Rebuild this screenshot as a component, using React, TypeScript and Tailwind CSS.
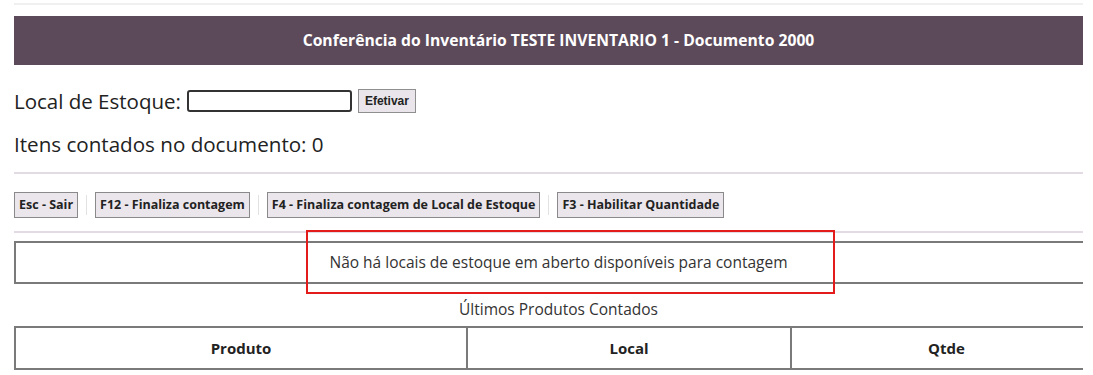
import React from 'react';

const FONT = { fontFamily: '"Open Sans", "Noto Sans", Arial, sans-serif' };

const SHORTCUTS = [
  'Esc - Sair',
  'F12 - Finaliza contagem',
  'F4 - Finaliza contagem de Local de Estoque',
  'F3 - Habilitar Quantidade',
];

export default function App() {
  return (
    <div className="relative w-[1093px] h-[375px] overflow-hidden bg-white text-[#222]" style={FONT}>
      <div className="w-[1083px] overflow-hidden">
        <div className="w-[1103px] pl-[14px] pt-[3px]">
          <div className="h-[2px] bg-[#f0f0f0]" />

          {/* Title bar */}
          <div className="mt-[11px] h-[49px] bg-[#5c4a5a] flex items-center justify-center">
            <h1 className="text-white font-bold text-[15.7px]">
              Conferência do Inventário TESTE INVENTARIO 1 - Documento 2000
            </h1>
          </div>

          {/* Local */}
          <div className="mt-[24px] flex items-center h-[24px]">
            <span className="text-[20.5px] leading-none">Local de Estoque:</span>
            <input
              type="text"
              className="ml-[6px] w-[165px] h-[22px] border-2 border-[#333] rounded-[3px] outline-none px-1"
            />
            <button
              className="ml-[6px] h-[24px] w-[58px] bg-[#e9e5ea] border border-[#8f8f8f] text-[12px] font-bold"
              style={{ fontFamily: '"Liberation Sans", Arial, sans-serif' }}
            >
              Efetivar
            </button>
          </div>

          <p className="mt-[19px] text-[20.6px] leading-[24px]">Itens contados no documento: 0</p>

          <div className="mt-[16px] h-[2px] bg-[#e3dbe3]" />

          {/* Shortcuts */}
          <div className="mt-[18px] flex items-center">
            {SHORTCUTS.map((s, i) => (
              <React.Fragment key={s}>
                {i > 0 && <div className="mx-[8px] w-[1px] h-[20px] bg-[#e2e2e2]" />}
                <button className="h-[26px] px-[4px] bg-[#ebe6eb] border border-[#8a8a8a] text-[12.5px] font-bold whitespace-nowrap">
                  {s}
                </button>
              </React.Fragment>
            ))}
          </div>

          <div className="mt-[13px] h-[2px] bg-[#e3dbe3]" />

          {/* Message */}
          <div className="mt-[8px] h-[43px] border-2 border-[#7a7a7a] flex items-center justify-center">
            <span className="text-[15.5px] text-[#333]">Não há locais de estoque em aberto disponíveis para contagem</span>
          </div>

          <p className="mt-[14px] text-center text-[15.5px] text-[#333] leading-[22px]">Últimos Produtos Contados</p>

          <table className="mt-[6px] w-full border-collapse">
            <thead>
              <tr className="h-[42px]">
                <th className="w-[452px] border-2 border-[#7a7a7a] text-[15px] font-bold">Produto</th>
                <th className="w-[324px] border-2 border-[#7a7a7a] text-[15px] font-bold">Local</th>
                <th className="border-2 border-[#7a7a7a] text-[15px] font-bold">Qtde</th>
              </tr>
            </thead>
          </table>
        </div>
      </div>

      {/* annotation */}
      <div className="absolute left-[306px] top-[230px] w-[529px] h-[64px] border-2 border-[#e41b1b] pointer-events-none" />
    </div>
  );
}
